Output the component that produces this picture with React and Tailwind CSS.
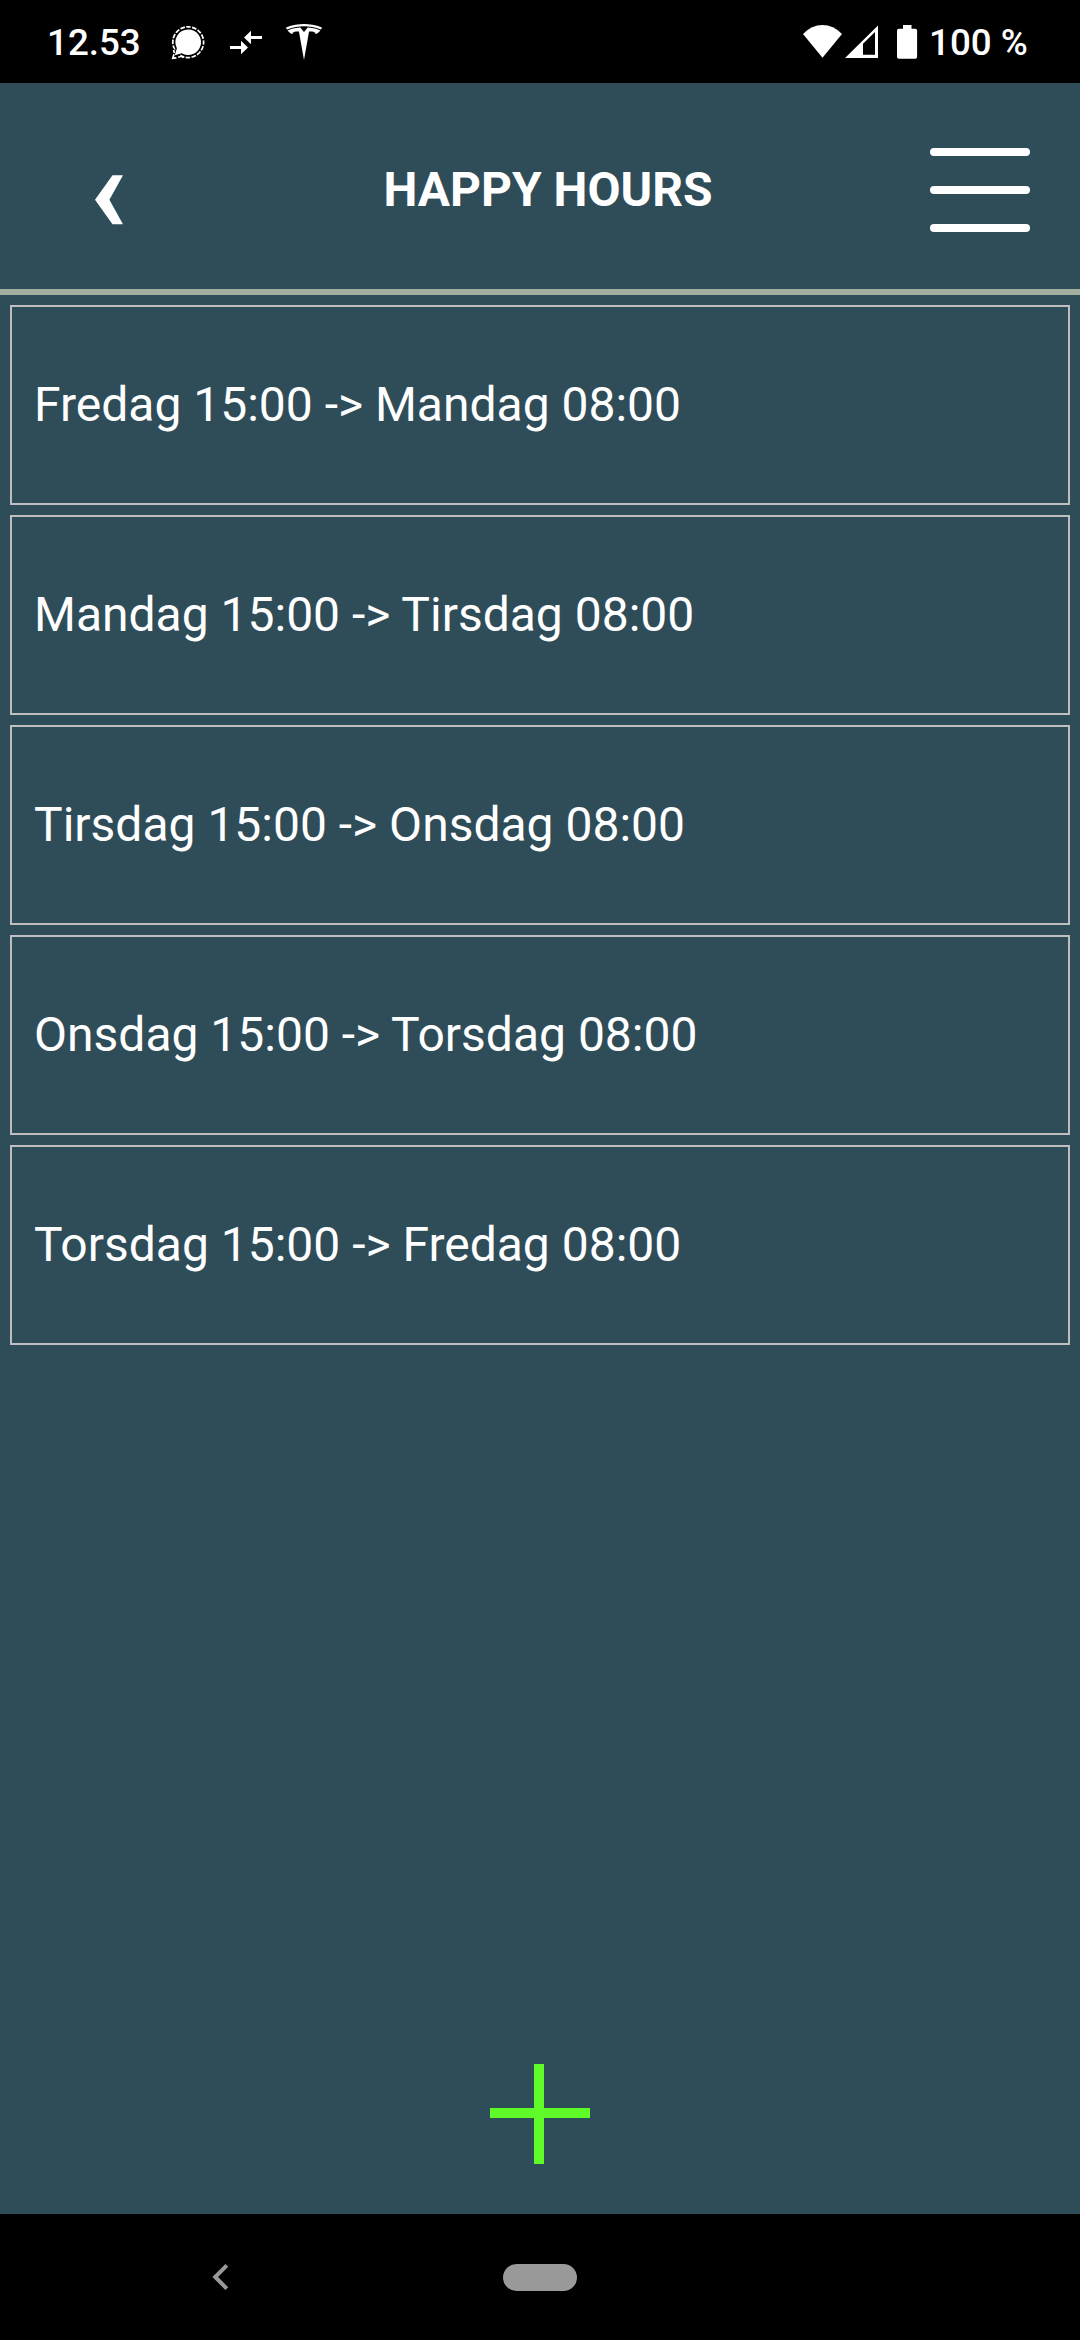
const hours = [
  'Fredag 15:00 -> Mandag 08:00',
  'Mandag 15:00 -> Tirsdag 08:00',
  'Tirsdag 15:00 -> Onsdag 08:00',
  'Onsdag 15:00 -> Torsdag 08:00',
  'Torsdag 15:00 -> Fredag 08:00',
];

function ChatIcon() {
  return (
    <svg className="ml-[30px] h-[36px] w-[36px] shrink-0" viewBox="170 23 36 36">
      <circle cx="188.2" cy="41.2" r="15.4" fill="none" stroke="#fff" strokeWidth="1.7" strokeDasharray="4.6 1.4" strokeDashoffset="2" pathLength="96" />
      <path d="M172 46L184 58L180 60H170Z" fill="#000" />
      <path d="M173.6 49L174.4 52M174 53.2L172.8 57.2L176.4 56.8M178.2 56.2L181 55.3L183.4 56.4" fill="none" stroke="#fff" strokeWidth="1.7" />
      <path d="M188.2 28.4a12.8 12.8 0 1 1-6.5 23.8L174.8 54.3L176.9 47.3A12.8 12.8 0 0 1 188.2 28.4Z" fill="#fff" />
    </svg>
  );
}

function ArrowsIcon() {
  return (
    <svg className="ml-[23px] h-[26px] w-[34px] shrink-0" viewBox="229 28 34 26" fill="#fff">
      <path d="M230 45h11v-5.3l7 6.8l-7 6.8V48h-11Z" />
      <path d="M262 35h-11v-5.3l-7 6.8l7 6.8V38h11Z" />
    </svg>
  );
}

function TeslaIcon() {
  return (
    <svg className="ml-[23px] h-[36px] w-[36px] shrink-0" viewBox="0 0 24 24" fill="#fff">
      <path d="M12 5.362l2.475-3.026s4.245.09 8.471 2.054c-1.082 1.636-3.231 2.438-3.231 2.438-.146-1.439-1.154-1.79-4.354-1.79L12 24 8.619 5.034c-3.18 0-4.188.354-4.335 1.792 0 0-2.146-.795-3.229-2.43C5.28 2.431 9.525 2.34 9.525 2.34L12 5.362zm0-3.899c3.415-.03 7.326.528 11.328 2.28.535-.968.672-1.395.672-1.395C19.625.612 15.528.015 12 0 8.472.015 4.375.61 0 2.349c0 0 .195.525.672 1.396C4.674 1.989 8.585 1.435 12 1.46z" />
    </svg>
  );
}

function StatusBar() {
  return (
    <div className="flex h-[83px] items-center bg-black text-[36.75px] leading-none font-medium">
      <span className="ml-[47px] w-[93px] shrink-0 whitespace-nowrap pt-[4px]">12.53</span>
      <ChatIcon />
      <ArrowsIcon />
      <TeslaIcon />
      <div className="ml-auto flex items-center">
        <svg className="h-[36px] w-[116px] shrink-0" viewBox="802 23 116 36" fill="#fff">
          <path d="M803 33Q811.5 24 822.5 24T842 33L822.5 56.7Z" />
          <path fillRule="evenodd" d="M845 57L878 24.5V57ZM863 42.7V53.7H875V31Z" />
          <path d="M903 24h8.5v3.7h3.8a1.8 1.8 0 0 1 1.8 1.8v26.5a1.8 1.8 0 0 1-1.8 1.8h-16.5a1.8 1.8 0 0 1-1.8-1.8v-26.5a1.8 1.8 0 0 1 1.8-1.8h4.2Z" />
        </svg>
        <span className="ml-[11px] w-[151px] whitespace-nowrap pt-[4px]">100 %</span>
      </div>
    </div>
  );
}

function Header() {
  return (
    <header className="flex h-[212px] items-center justify-between border-b-[6px] border-[#a2ae9e] pr-[50px] pl-[95px]">
      <button className="pt-[27px]" aria-label="Tilbage">
        <svg className="h-[50px] w-[28px]" viewBox="0 0 28 50" fill="#fff">
          <path d="M0 24.7L17.5 0.3H28L14.4 24.7L28 49.2H17.5Z" />
        </svg>
      </button>
      <h1 className="ml-[43px] pt-[8px] text-[48px] leading-none font-bold whitespace-nowrap">HAPPY HOURS</h1>
      <button className="mt-[8px] flex w-[100px] flex-col gap-[30px]" aria-label="Menu">
        <span className="h-2 rounded-full bg-white" />
        <span className="h-2 rounded-full bg-white" />
        <span className="h-2 rounded-full bg-white" />
      </button>
    </header>
  );
}

export default function App() {
  return (
    <div className="flex h-[2340px] w-[1080px] flex-col overflow-hidden bg-[#2f4d59] font-['Roboto',sans-serif] text-white">
      <StatusBar />
      <Header />
      <main className="flex flex-1 flex-col gap-[10px] p-[10px]">
        {hours.map((label) => (
          <div key={label} className="flex h-[200px] items-center border-2 border-[#bebebe] pl-[22px] text-[48px] leading-none whitespace-nowrap">
            {label}
          </div>
        ))}
      </main>
      <div className="flex justify-center pb-[50px]">
        <svg className="h-[100px] w-[100px]" viewBox="0 0 100 100" fill="#5ffa28" shapeRendering="crispEdges">
          <path d="M44 0h10v44h46v10H54v46H44V54H0V44h44Z" />
        </svg>
      </div>
      <nav className="flex h-[126px] items-center bg-black">
        <svg className="ml-[212px] h-[28px] w-[18px]" viewBox="0 0 18 28" fill="none" stroke="#999" strokeWidth="4">
          <path d="M14.8 2.4L3.2 14L14.8 25.6" />
        </svg>
        <span className="ml-[273px] h-[27px] w-[74px] rounded-full bg-[#999]" />
      </nav>
    </div>
  );
}
